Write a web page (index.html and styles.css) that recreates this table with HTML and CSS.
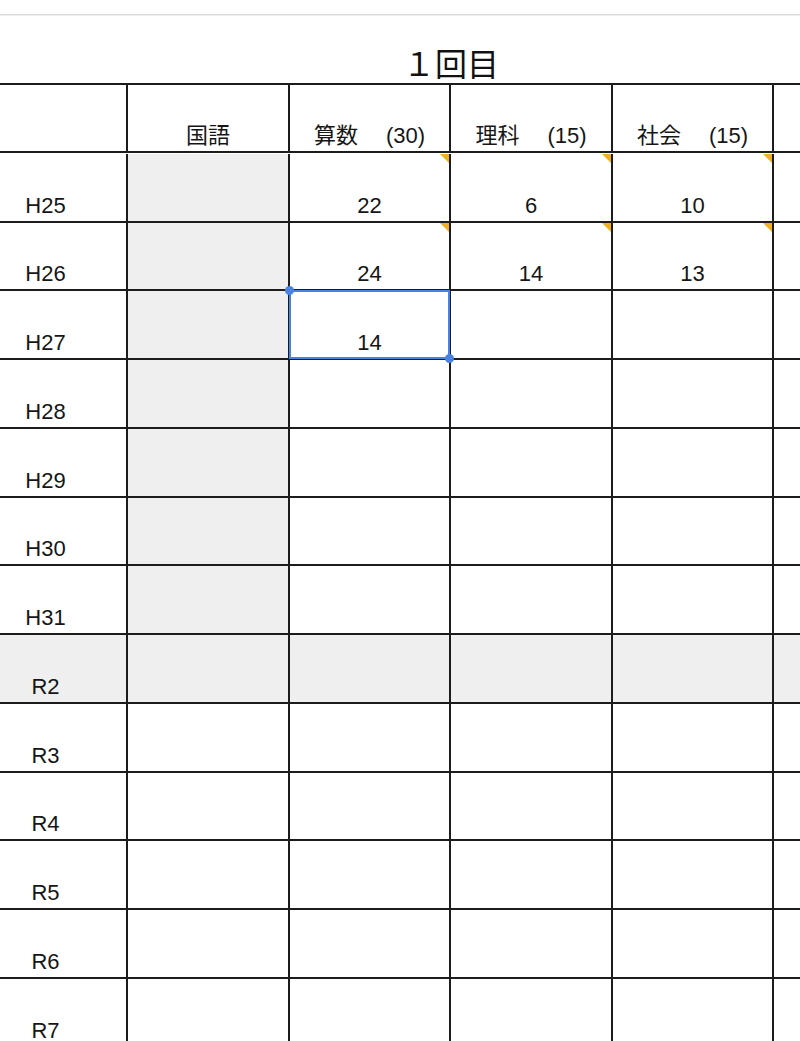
FILE: index.html
```html
<!DOCTYPE html>
<html lang="ja">
<head>
<meta charset="utf-8">
<title>1回目</title>
<link rel="stylesheet" href="styles.css">
</head>
<body>
<div class="topline"></div>
<div class="sheet">
  <div class="title-row">
    <div class="title-pad"></div>
    <div class="title">１回目</div>
  </div>
  <div class="grid">
    <div class="c c-label hdr"></div>
    <div class="c hdr">国語</div>
    <div class="c hdr">算数　 (30)</div>
    <div class="c hdr">理科　 (15)</div>
    <div class="c hdr">社会　 (15)</div>
    <div class="c hdr c-last"></div>

    <div class="c c-label">H25</div>
    <div class="c gray"></div>
    <div class="c note">22</div>
    <div class="c note">6</div>
    <div class="c note">10</div>
    <div class="c c-last"></div>

    <div class="c c-label">H26</div>
    <div class="c gray"></div>
    <div class="c note">24</div>
    <div class="c note">14</div>
    <div class="c note">13</div>
    <div class="c c-last"></div>

    <div class="c c-label">H27</div>
    <div class="c gray"></div>
    <div class="c selected">14<span class="dot dot-tl"></span><span class="dot dot-br"></span></div>
    <div class="c"></div>
    <div class="c"></div>
    <div class="c c-last"></div>

    <div class="c c-label">H28</div>
    <div class="c gray"></div>
    <div class="c"></div>
    <div class="c"></div>
    <div class="c"></div>
    <div class="c c-last"></div>

    <div class="c c-label">H29</div>
    <div class="c gray"></div>
    <div class="c"></div>
    <div class="c"></div>
    <div class="c"></div>
    <div class="c c-last"></div>

    <div class="c c-label">H30</div>
    <div class="c gray"></div>
    <div class="c"></div>
    <div class="c"></div>
    <div class="c"></div>
    <div class="c c-last"></div>

    <div class="c c-label">H31</div>
    <div class="c gray"></div>
    <div class="c"></div>
    <div class="c"></div>
    <div class="c"></div>
    <div class="c c-last"></div>

    <div class="c c-label gray">R2</div>
    <div class="c gray"></div>
    <div class="c gray"></div>
    <div class="c gray"></div>
    <div class="c gray"></div>
    <div class="c c-last gray"></div>

    <div class="c c-label">R3</div>
    <div class="c"></div>
    <div class="c"></div>
    <div class="c"></div>
    <div class="c"></div>
    <div class="c c-last"></div>

    <div class="c c-label">R4</div>
    <div class="c"></div>
    <div class="c"></div>
    <div class="c"></div>
    <div class="c"></div>
    <div class="c c-last"></div>

    <div class="c c-label">R5</div>
    <div class="c"></div>
    <div class="c"></div>
    <div class="c"></div>
    <div class="c"></div>
    <div class="c c-last"></div>

    <div class="c c-label">R6</div>
    <div class="c"></div>
    <div class="c"></div>
    <div class="c"></div>
    <div class="c"></div>
    <div class="c c-last"></div>

    <div class="c c-label">R7</div>
    <div class="c"></div>
    <div class="c"></div>
    <div class="c"></div>
    <div class="c"></div>
    <div class="c c-last"></div>
  </div>
</div>
</body>
</html>
```

FILE: styles.css
```css
* {
  box-sizing: border-box;
}

html, body {
  margin: 0;
  padding: 0;
  background: #ffffff;
  overflow: hidden;
  height: 1041px;
}

body {
  font-family: "Liberation Sans", "Noto Sans CJK JP", sans-serif;
  color: #161616;
}

.topline {
  margin-top: 14px;
  height: 2px;
  background: #d9d9d9;
  border-bottom: 1px solid #eeeeee;
}

.title-row {
  display: grid;
  grid-template-columns: 128px 646px 1fr;
  height: 67px;
}

.title {
  display: flex;
  align-items: flex-end;
  justify-content: center;
  font-family: "Noto Sans CJK JP", sans-serif;
  font-size: 32px;
  line-height: 32px;
  padding-bottom: 5px;
  color: #111;
}

.grid {
  display: grid;
  grid-template-columns: 128px 162px 161px 162px 161px 1fr;
  grid-auto-rows: 68.75px;
  border-top: 2px solid #1c1c1c;
}

.c {
  position: relative;
  border-right: 2px solid #1c1c1c;
  border-bottom: 2px solid #1c1c1c;
  display: flex;
  align-items: flex-end;
  justify-content: center;
  font-size: 22px;
  line-height: 22px;
  padding-bottom: 4px;
  white-space: pre;
}

.hdr {
  height: 68px;
}

.c-label {
  padding-right: 35px;
}

.c-last {
  border-right: none;
}

.gray {
  background: #efefef;
}

.note::after {
  content: "";
  position: absolute;
  top: 0;
  right: 0;
  width: 0;
  height: 0;
  border-top: 9px solid #f0b020;
  border-left: 9px solid transparent;
}

.selected::before {
  content: "";
  position: absolute;
  left: -1px;
  top: -1px;
  right: -1px;
  bottom: -1px;
  border: 2px solid #4a82e0;
  pointer-events: none;
}

.dot {
  position: absolute;
  width: 9px;
  height: 9px;
  border-radius: 50%;
  background: #4a82e0;
  z-index: 2;
}

.dot-tl {
  left: -5px;
  top: -5px;
}

.dot-br {
  right: -5px;
  bottom: -5px;
}
```
